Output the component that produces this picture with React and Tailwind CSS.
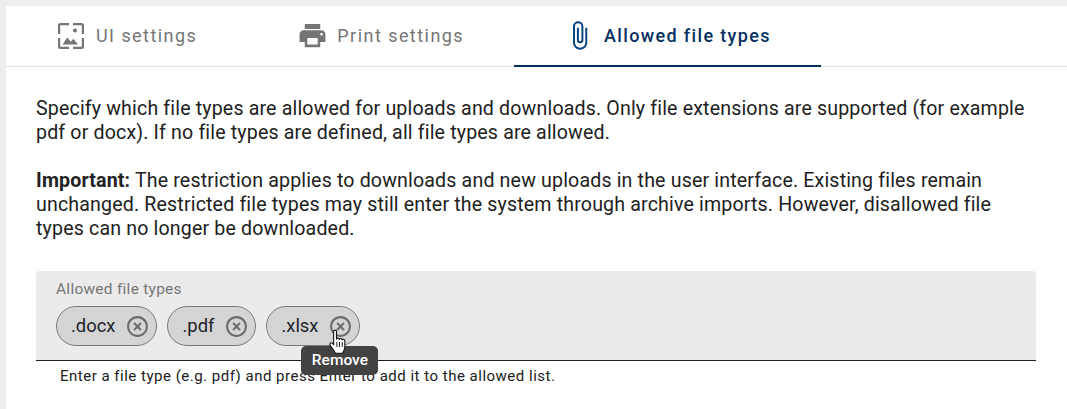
import React from 'react';
import { MdPrint, MdAttachFile, MdHighlightOff } from 'react-icons/md';

const ImageFrameIcon = ({ className }) => (
  <svg viewBox="0 0 26 26" className={className} fill="currentColor">
    <path d="M0 2.500A2.500 2.500 0 0 1 2.500 0H11v2.200H2.700a.5.5 0 0 0-.5.5V11H0V2.500zM15 0h8.500A2.500 2.500 0 0 1 26 2.500V11h-2.200V2.700a.5.5 0 0 0-.5-.5H15V0zM0 15h2.200v8.300a.5.5 0 0 0 .5.5H11V26H2.500A2.500 2.500 0 0 1 0 23.500V15zM23.800 15H26v8.500a2.500 2.500 0 0 1-2.500 2.500H15v-2.200h8.300a.5.5 0 0 0 .5-.5V15z" />
    <circle cx="17" cy="7.500" r="2" />
    <path d="M4.500 21.500l4.800-7 3.500 4.300 2.500-3 4.700 5.700z" />
  </svg>
);

const HandCursor = ({ className }) => (
  <svg viewBox="0 0 18 24" className={className}>
    <path
      d="M5 2.200c0-1.600 2.600-1.600 2.600 0v7.200c.4-1.400 2.600-1.200 2.700.3.3-1.300 2.500-1.100 2.600.4.4-1 2.400-.8 2.400.8v5.600c0 2.600-1.400 4.200-2 5.900H6.600c-.6-1.900-2.600-4-4.800-7.300-1.200-1.800.8-3.200 2.100-1.800l1.100 1.200V2.200z"
      fill="#fff"
      stroke="#111"
      strokeWidth="1"
      strokeLinejoin="round"
    />
    <path d="M8 12v4.500M10.400 12v4.500M12.900 12v4.500" stroke="#111" strokeWidth=".9" fill="none" />
  </svg>
);

const TABS = [
  { label: 'UI settings', slot: 'w-[26px]', pad: 'px-[51px] pb-[2px] gap-[12px] tracking-[1.45px] text-[#757575]', icon: <ImageFrameIcon className="w-[26px] h-[26px] shrink-0" /> },
  { label: 'Print settings', slot: 'w-[26px]', pad: 'pl-[51px] pr-[50px] pb-[2px] gap-[12px] tracking-[1.45px] text-[#757575]', icon: <MdPrint size={31} className="shrink-0" /> },
  { label: 'Allowed file types', slot: 'w-[28px] text-[#05417f]', pad: 'pl-[51px] pr-[50px] gap-[11px] tracking-[1.35px] font-medium text-[#05305f] border-b-2 border-[#05305f]', icon: <MdAttachFile size={31} className="shrink-0" /> },
];

const CHIPS = ['.docx', '.pdf', '.xlsx'];

const Chip = ({ label, children }) => (
  <div className="relative flex items-center h-10 pl-[14px] pr-[6px] gap-[10px] rounded-full bg-[#d4d4d4] border border-[#7a7a7a]">
    <span className="text-[18.4px] leading-none text-[#1f2328]">{label}</span>
    <MdHighlightOff size={25} className="text-[#6b6b6b]" />
    {children}
  </div>
);

export default function App() {
  return (
    <div className="h-[409px] w-[1067px] overflow-hidden bg-[#eeeeee] pt-[6px] pl-[6px] font-['Roboto',sans-serif]">
      <div className="h-full bg-white">
        {/* Tabs */}
        <div className="flex h-[61px] pl-px border-b border-[#e0e0e0]">
          {TABS.map((tab) => (
            <div key={tab.label} className={`flex items-center h-[61px] text-[18px] ${tab.pad}`}>
              <span className={`flex justify-center ${tab.slot}`}>{tab.icon}</span>
              {tab.label}
            </div>
          ))}
        </div>

        <div className="pl-[30px] pr-[31px]">
          <p className="mt-[30px] text-[19.6px] leading-[24px] tracking-[.155px] text-[#212121]">
            Specify which file types are allowed for uploads and downloads. Only file extensions are supported (for example pdf or docx). If no file types are defined, all file types are allowed.
          </p>
          <p className="mt-[24px] text-[19.6px] leading-[24px] tracking-[.155px] text-[#212121]">
            <b>Important:</b> The restriction applies to downloads and new uploads in the user interface. Existing files remain unchanged. Restricted file types may still enter the system through archive imports. However, disallowed file types can no longer be downloaded.
          </p>

          {/* Allowed file types input */}
          <div className="mt-[30px] h-[90px] rounded-t-[4px] bg-[#ebebeb] border-b border-[#212121] pl-[20px] pt-[10px]">
            <div className="text-[15.4px] leading-[17px] tracking-[.3px] text-[#757575]">Allowed file types</div>
            <div className="mt-[8px] flex gap-[10px]">
              {CHIPS.map((c) => (
                <Chip key={c} label={c}>
                  {c === '.xlsx' && (
                    <>
                      <div className="absolute left-[34px] top-[39px] w-[77px] h-[29px] flex items-center justify-center rounded-[5px] bg-[#424242] text-white text-[15.5px] font-medium z-10">
                        Remove
                      </div>
                      <HandCursor className="absolute left-[61px] top-[22px] w-[20px] h-[26px] z-20" />
                    </>
                  )}
                </Chip>
              ))}
            </div>
          </div>
          <p className="mt-[7px] pl-[24px] text-[15px] leading-[17px] tracking-[.5px] text-[#212121]">
            Enter a file type (e.g. pdf) and press Enter to add it to the allowed list.
          </p>
        </div>
      </div>
    </div>
  );
}
